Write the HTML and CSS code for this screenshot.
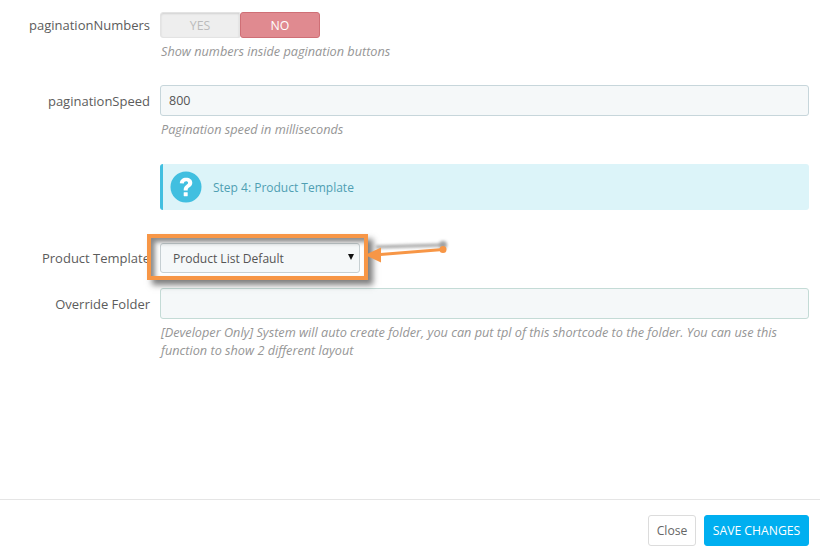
FILE: index.html
```html
<!DOCTYPE html>
<html lang="en">
<head>
<meta charset="utf-8">
<title>Product Template</title>
<link rel="stylesheet" href="styles.css">
</head>
<body>
<main class="form">
  <div class="row row-numbers">
    <label class="label">paginationNumbers</label>
    <div class="control">
      <div class="toggle"><span class="opt opt-yes">YES</span><span class="opt opt-no">NO</span></div>
      <p class="help">Show numbers inside pagination buttons</p>
    </div>
  </div>
  <div class="row row-speed">
    <label class="label">paginationSpeed</label>
    <div class="control">
      <div class="input">800</div>
      <p class="help">Pagination speed in milliseconds</p>
    </div>
  </div>
  <div class="row row-alert">
    <div class="label"></div>
    <div class="control">
      <div class="alert">
        <svg class="alert-icon" width="32" height="32" viewBox="0 0 32 32"><circle cx="16" cy="16" r="15.5" fill="#41bfe0"/><path d="M9.800 12.200c.3-3.400 2.800-5.400 6.300-5.400 3.600 0 6.200 2 6.200 5 0 2.300-1.300 3.400-2.800 4.500-1.200.9-1.800 1.400-1.800 2.700v.5h-4v-.9c0-2.200 1.100-3.400 2.400-4.400 1.100-.8 2-1.300 2-2.400 0-1-.8-1.600-2-1.600-1.300 0-2.100.8-2.300 2.300z" fill="#fff"/><rect x="13.700" y="21.200" width="4" height="4" rx=".4" fill="#fff"/></svg>
        <span class="alert-text">Step 4: Product Template</span>
      </div>
    </div>
  </div>
  <div class="row row-template">
    <label class="label">Product Template</label>
    <div class="control">
      <div class="select"><span>Product List Default</span><span class="caret"></span></div>
    </div>
  </div>
  <div class="row row-folder">
    <label class="label">Override Folder</label>
    <div class="control">
      <div class="input input-empty"></div>
      <p class="help help-long">[Developer Only] System will auto create folder, you can put tpl of this shortcode to the folder. You can use this function to show 2 different layout</p>
    </div>
  </div>
</main>
<footer class="footer">
  <button class="btn btn-close">Close</button>
  <button class="btn btn-save">SAVE CHANGES</button>
</footer>
<div class="callout"></div>
<svg class="arrow arrow-shadow" width="100" height="40" viewBox="0 0 100 40"><path d="M14 15 L81 13" stroke="#555" stroke-width="3" fill="none"/><circle cx="81" cy="13" r="4" fill="#555"/></svg>
<svg class="arrow" width="100" height="40" viewBox="0 0 100 40"><path d="M12 23 L81 17.500" stroke="#f79646" stroke-width="3" fill="none"/><circle cx="81" cy="17.500" r="3.500" fill="#f79646"/><path d="M3 23 L19 15.500 L19 30.500 Z" fill="#f79646"/></svg>
</body>
</html>
```
FILE: styles.css
```css
* { box-sizing: border-box; }
html, body { margin: 0; padding: 0; }
body {
  width: 820px;
  height: 550px;
  background: #fff;
  overflow: hidden;
  position: relative;
  font-family: "Open Sans", sans-serif;
  font-size: 12.350px;
  color: #555;
}
.form { height: 499px; padding-top: 12px; }
.row { display: flex; align-items: flex-start; }
.label {
  width: 150px;
  flex: none;
  text-align: right;
  line-height: 18px;
  font-size: 13px;
  color: #5c5c5c;
}
.control { width: 649px; margin-left: 10px; }
.help {
  margin: 0;
  padding-left: 1px;
  font-style: italic;
  font-size: 12.700px;
  line-height: 18px;
  color: #969696;
}
.row-numbers { height: 73px; }
.row-numbers .label { padding-top: 4px; }
.row-numbers .help { margin-top: 4px; }
.row-speed { height: 79px; }
.row-speed .label { padding-top: 7px; }
.row-speed .help { margin-top: 4px; }
.row-alert { height: 79px; }
.row-template { height: 45px; }
.row-template .label { padding-top: 6px; }
.row-folder .label { padding-top: 7px; }
.row-folder .help { margin-top: 4px; }
.toggle {
  display: flex;
  width: 160px;
  height: 26px;
}
.opt {
  width: 80px;
  display: flex;
  align-items: center;
  justify-content: center;
  font-size: 12.300px;
}
.opt-yes {
  background: #eeeeee;
  color: #bbb;
  border: 1px solid #e3e3e3;
  border-radius: 3px 0 0 3px;
  box-shadow: inset 0 1px 2px rgba(0,0,0,.12);
}
.opt-no {
  background: #e08a90;
  color: #fff;
  border: 1px solid #cf6f76;
  border-radius: 3px;
}
.input {
  height: 31px;
  background: #f5f8f9;
  border: 1px solid #c7d6db;
  border-radius: 3px;
  padding: 0 8px;
  line-height: 29px;
  font-size: 12.500px;
  color: #555;
}
.input-empty { border-color: #c4dbd6; }
.alert {
  height: 46px;
  background: #dcf4f9;
  border-left: 3px solid #41bfe0;
  border-radius: 3px;
  display: flex;
  align-items: center;
  gap: 11px;
  padding-left: 7px;
}
.alert-icon { flex: none; }
.alert-text { font-size: 12px; color: #4f9fb3; }
.select {
  width: 200px;
  height: 30px;
  background: #f5f8f9;
  border: 1px solid #c7d0d3;
  border-radius: 3px;
  display: flex;
  align-items: center;
  justify-content: space-between;
  padding: 0 5px 0 12px;
  font-size: 12.050px;
  color: #555;
}
.caret {
  width: 0;
  height: 0;
  border-left: 3.500px solid transparent;
  border-right: 3.500px solid transparent;
  border-top: 6px solid #111;
  margin-bottom: 3px;
}
.footer {
  height: 51px;
  border-top: 1px solid #e5e5e5;
  display: flex;
  justify-content: flex-end;
  align-items: flex-start;
  gap: 8px;
  padding: 15px 11px 0 0;
}
.btn {
  height: 31px;
  font-family: "Open Sans", sans-serif;
  font-size: 12.200px;
  border-radius: 3px;
  padding: 0;
}
.btn-close {
  width: 48px;
  background: #fff;
  border: 1px solid #dcdcdc;
  color: #666;
}
.btn-save {
  width: 105px;
  background: #00aff0;
  border: 1px solid #00aff0;
  color: #fff;
}
/* Annotation drawn over the screenshot */
.callout {
  position: absolute;
  left: 147px;
  top: 234px;
  width: 221px;
  height: 46px;
  border: 4px solid #f79646;
  box-shadow: 5px 5px 6px rgba(40,40,40,.6), inset 4px 4px 5px rgba(40,40,40,.55);
}
.arrow { position: absolute; left: 362px; top: 232px; }
.arrow-shadow { filter: blur(1.500px); opacity: .55; }
```
